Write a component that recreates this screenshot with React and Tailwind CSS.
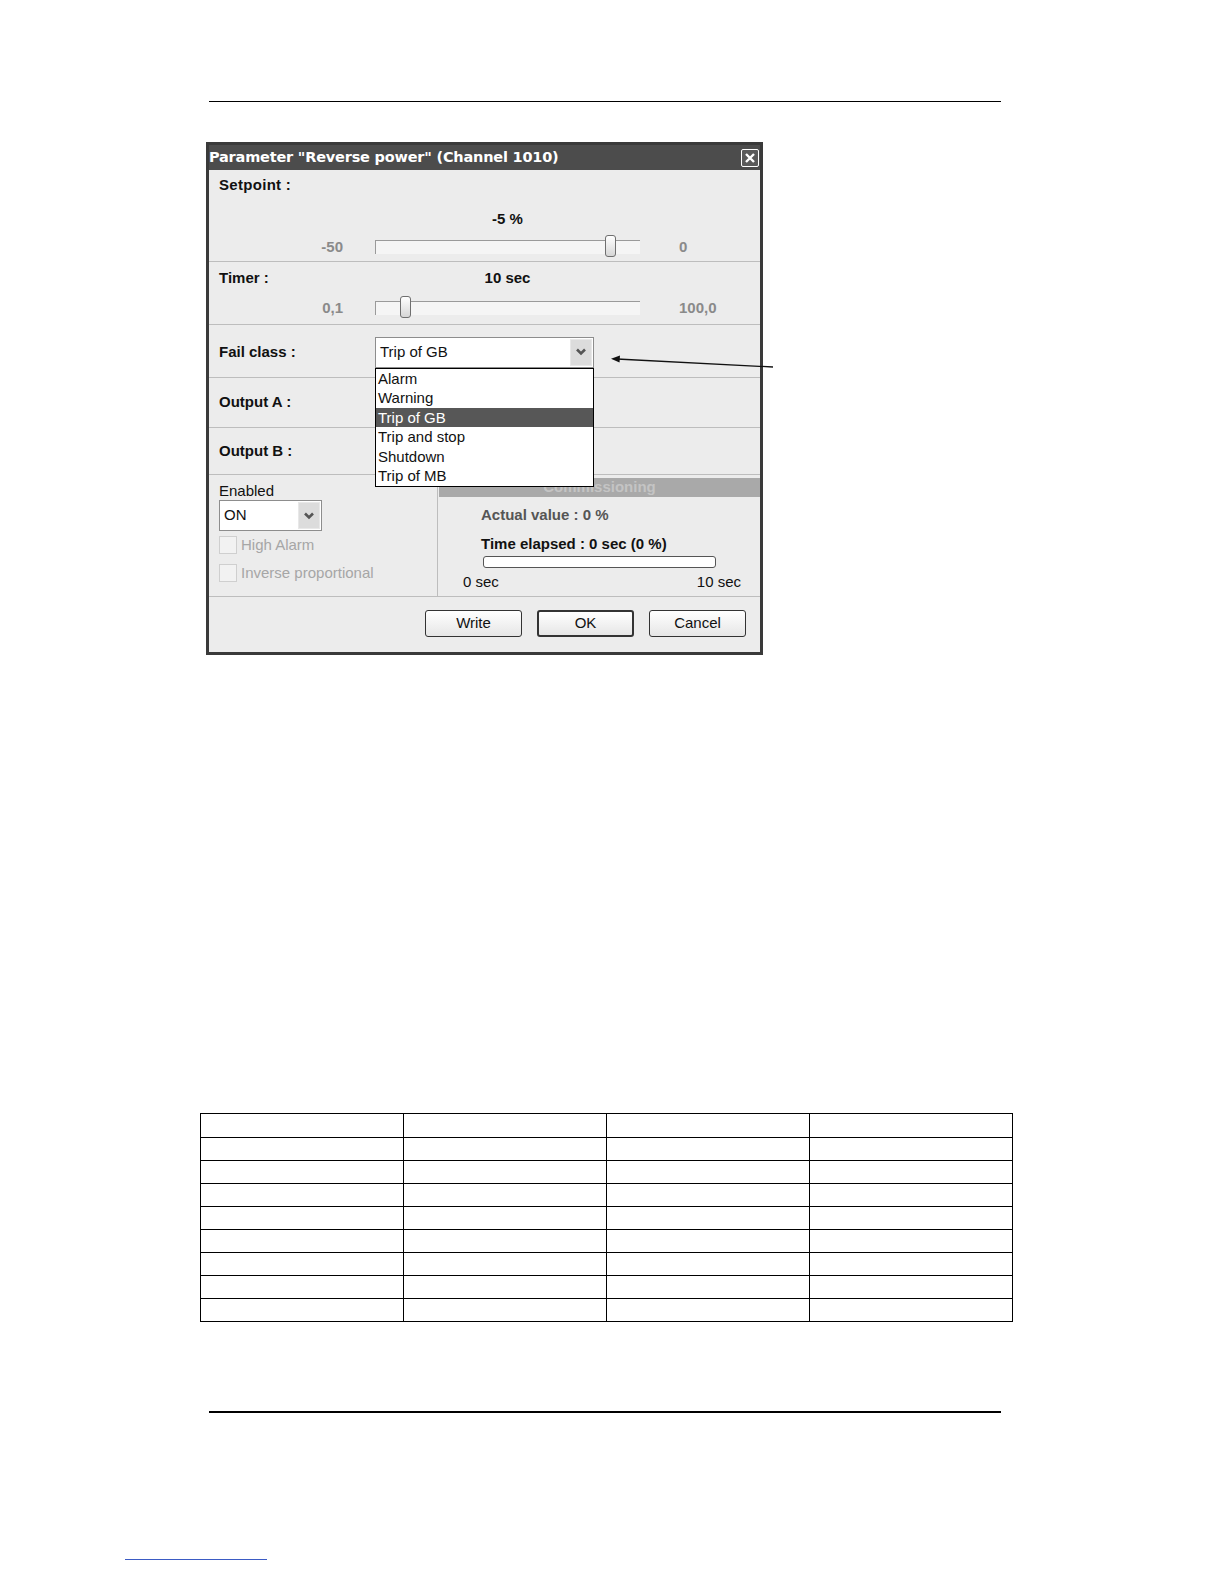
import React from 'react'

function Chevron() {
  return (
    <svg width="12" height="8" viewBox="0 0 12 8">
      <polyline points="2,1.5 6,5.5 10,1.5" fill="none" stroke="#555" strokeWidth="2.6" />
    </svg>
  )
}

function Slider({ thumbLeft }) {
  return (
    <div className="relative w-[265px] h-[14px] border-t border-l border-[#9a9a9a] bg-[#f5f5f5]">
      <div
        className={`absolute top-[-6px] ${thumbLeft} w-[11px] h-[22px] rounded-[3px] border border-[#6f6f6f] bg-gradient-to-b from-white to-[#d6d6d6]`}
      />
    </div>
  )
}

function Checkbox({ label }) {
  return (
    <div className="flex items-center h-[18px]">
      <div className="w-[18px] h-[18px] border border-[#cfcfcf] bg-[#f2f2f2]" />
      <span className="ml-[4px] text-[15px] text-[#a6a6a6]">{label}</span>
    </div>
  )
}

function Button({ children, primary }) {
  return (
    <button
      className={`w-[97px] h-[27px] rounded-[3px] bg-gradient-to-b from-white to-[#e6e6e6] text-[15px] text-[#111] ${
        primary ? 'border-2 border-[#333]' : 'border border-[#333]'
      }`}
    >
      {children}
    </button>
  )
}

const failClasses = ['Alarm', 'Warning', 'Trip of GB', 'Trip and stop', 'Shutdown', 'Trip of MB']

function Dialog() {
  return (
    <div className="w-[557px] bg-[#3a3a3a] p-[3px]">
      {/* title bar */}
      <div className="h-[25px] bg-[#4c4c4c] flex items-center justify-between pr-[1px]">
        <span className="text-white font-bold text-[14.5px] font-['DejaVu_Sans',sans-serif] tracking-[-0.2px]">
          Parameter "Reverse power" (Channel 1010)
        </span>
        <div className="w-[18px] h-[18px] border-[1.5px] border-white rounded-[2px] bg-[#5a5a5a] flex items-center justify-center">
          <svg width="10" height="10" viewBox="0 0 10 10">
            <path d="M1 1 L9 9 M9 1 L1 9" stroke="white" strokeWidth="2.4" />
          </svg>
        </div>
      </div>

      <div className="bg-[#ececec] text-[#111]">
        {/* Setpoint */}
        <div className="h-[92px] border-b border-[#bdbdbd] pt-[7px]">
          <div className="pl-[10px] h-[16px] leading-[16px] font-bold text-[15px] tracking-[0.3px]">Setpoint :</div>
          <div className="mt-[18px] h-[16px] leading-[16px] font-bold text-[15px] flex">
            <div className="w-[166px]" />
            <div className="w-[265px] text-center">-5 %</div>
          </div>
          <div className="mt-[9px] flex items-center">
            <div className="w-[134px] text-right font-bold text-[15px] text-[#8a8a8a]">-50</div>
            <div className="ml-[32px]">
              <Slider thumbLeft="left-[229px]" />
            </div>
            <div className="ml-[39px] font-bold text-[15px] text-[#8a8a8a]">0</div>
          </div>
        </div>

        {/* Timer */}
        <div className="h-[63px] border-b border-[#bdbdbd] pt-[8px]">
          <div className="flex h-[16px] leading-[16px] font-bold text-[15px]">
            <div className="pl-[10px] w-[166px]">Timer :</div>
            <div className="w-[265px] text-center">10 sec</div>
          </div>
          <div className="mt-[11px] flex items-center">
            <div className="w-[134px] text-right font-bold text-[15px] text-[#8a8a8a]">0,1</div>
            <div className="ml-[32px]">
              <Slider thumbLeft="left-[24px]" />
            </div>
            <div className="ml-[39px] font-bold text-[15px] text-[#8a8a8a]">100,0</div>
          </div>
        </div>

        {/* Fail class */}
        <div className="h-[53px] border-b border-[#bdbdbd] flex items-center pt-[2px] pl-[10px]">
          <div className="w-[156px] font-bold text-[15px]">Fail class :</div>
          <div className="relative">
            <div className="w-[219px] h-[31px] border border-[#8d8d8d] bg-white flex items-center justify-between pl-[4px] pr-[1px]">
              <span className="text-[15px]">Trip of GB</span>
              <div className="w-[22px] h-[27px] bg-[#dcdcdc] border border-[#e8e8e8] flex items-center justify-center">
                <Chevron />
              </div>
            </div>
            <div className="absolute top-full left-0 z-10 w-[219px] border border-black bg-white">
              {failClasses.map((f) => (
                <div
                  key={f}
                  className={`h-[19.6px] leading-[19.6px] pl-[2px] text-[15px] ${
                    f === 'Trip of GB' ? 'bg-[#575757] text-white' : 'text-[#111]'
                  }`}
                >
                  {f}
                </div>
              ))}
            </div>
          </div>
        </div>

        {/* Output A */}
        <div className="h-[50px] border-b border-[#bdbdbd] flex items-center pl-[10px] font-bold text-[15px]">
          Output A :
        </div>

        {/* Output B */}
        <div className="h-[47px] border-b border-[#bdbdbd] flex items-center pl-[10px] font-bold text-[15px]">
          Output B :
        </div>

        {/* bottom split */}
        <div className="h-[122px] border-b border-[#bdbdbd] flex">
          <div className="w-[229px] border-r border-[#bdbdbd] pl-[10px] pt-[8px]">
            <div className="h-[16px] leading-[16px] text-[15px]">Enabled</div>
            <div className="mt-[1px] w-[103px] h-[31px] border border-[#8d8d8d] bg-white flex items-center justify-between pl-[4px] pr-[1px]">
              <span className="text-[15px]">ON</span>
              <div className="w-[22px] h-[27px] bg-[#dcdcdc] border border-[#e8e8e8] flex items-center justify-center">
                <Chevron />
              </div>
            </div>
            <div className="mt-[5px]">
              <Checkbox label="High Alarm" />
            </div>
            <div className="mt-[10px]">
              <Checkbox label="Inverse proportional" />
            </div>
          </div>
          <div className="flex-1 pt-[3px] pl-[1px]">
            <div className="h-[19px] bg-[#a9a9a9] flex items-center justify-center font-bold text-[15px] text-[#c4c4c4]">
              Commissioning
            </div>
            <div className="mt-[10px] pl-[42px] h-[16px] leading-[16px] font-bold text-[15px] text-[#555]">
              Actual value : 0 %
            </div>
            <div className="mt-[13px] pl-[42px] h-[16px] leading-[16px] font-bold text-[15px]">
              Time elapsed : 0 sec (0 %)
            </div>
            <div className="mt-[4px] ml-[44px] w-[233px] h-[12px] rounded-[3px] border border-[#555] bg-white" />
            <div className="mt-[6px] pl-[24px] pr-[19px] h-[16px] leading-[16px] flex justify-between text-[15px]">
              <span>0 sec</span>
              <span>10 sec</span>
            </div>
          </div>
        </div>

        {/* buttons */}
        <div className="h-[55px] flex justify-end items-start pt-[13px] pr-[14px] gap-[15px]">
          <Button>Write</Button>
          <Button primary>OK</Button>
          <Button>Cancel</Button>
        </div>
      </div>
    </div>
  )
}

function EmptyTable() {
  const rows = Array.from({ length: 9 })
  return (
    <div className="ml-[200px] w-[813px] border-l border-t border-black">
      {rows.map((_, i) => (
        <div key={i} className="grid grid-cols-4">
          {[0, 1, 2, 3].map((c) => (
            <div key={c} className={`${i === 0 ? 'h-[24px]' : 'h-[23px]'} border-r border-b border-black`} />
          ))}
        </div>
      ))}
    </div>
  )
}

export default function App() {
  return (
    <div className="relative w-full h-screen bg-white overflow-hidden font-['Liberation_Sans',Arial,sans-serif]">
      <div className="pt-[101px] pl-[209px]">
        <div className="w-[792px] h-px bg-black" />
      </div>

      <div className="mt-[40px] ml-[206px]">
        <Dialog />
      </div>

      <div className="mt-[458px]">
        <EmptyTable />
      </div>

      <div className="mt-[89px] ml-[209px] w-[792px] h-[2px] bg-black" />

      <div className="mt-[146px] ml-[125px] w-[142px] h-px bg-[#3b5bc4]" />

      {/* annotation arrow */}
      <svg className="absolute left-[605px] top-[350px]" width="175" height="25" viewBox="0 0 175 25">
        <line x1="168" y1="17" x2="12" y2="9" stroke="#111" strokeWidth="1.3" />
        <polygon points="6,8.7 15,5.5 14.5,12.5" fill="#111" />
      </svg>
    </div>
  )
}
